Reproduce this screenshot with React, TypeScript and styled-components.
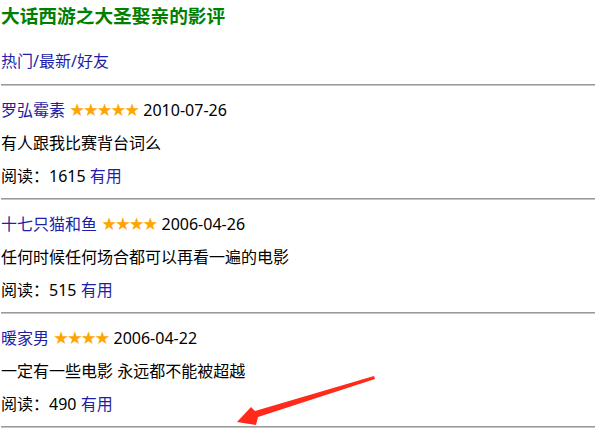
import React from "react";
import styled, { createGlobalStyle } from "styled-components";

const Global = createGlobalStyle`
  html, body { margin: 0; padding: 0; background: #fff; }
  body {
    font-family: "Noto Sans", "Noto Sans CJK SC", sans-serif;
    font-size: 16px;
    color: #000;
  }
`;

const Page = styled.div`
  position: relative;
  width: 595px;
  height: 437px;
  overflow: hidden;
`;

const Title = styled.h3`
  margin: 4px 0 0 1px;
  font-size: 18.7px;
  line-height: 24px;
  font-weight: bold;
  color: #008000;
`;

const Nav = styled.p`
  margin: 23px 0 0 1px;
  line-height: 20px;
  color: #1e1ea8;
`;

const NavLink = styled.a`
  color: #1e1ea8;
  text-decoration: none;
`;

const Rule = styled.hr<{ $gap?: number }>`
  margin: ${(p) => p.$gap ?? 12}px 0 0 1px;
  border: none;
  border-top: 1px solid #9a9a9a;
  border-bottom: 1px solid #c4c4c4;
  height: 0;
`;

const Review = styled.section`
  display: flex;
  flex-direction: column;
  gap: 13px;
  padding: 14px 0 0 1px;
`;

const Line = styled.p`
  margin: 0;
  height: 20px;
  line-height: 20px;
  white-space: nowrap;
`;

const UserLink = styled.a`
  color: #1e1ea8;
  text-decoration: none;
`;

const Stars = styled.span`
  font-family: "DejaVu Sans", sans-serif;
  font-size: 17.5px;
  line-height: 1;
  color: #ffa500;
  letter-spacing: -1.9px;
  margin-right: 1px;
`;

const Arrow = styled.svg`
  position: absolute;
  left: 230px;
  top: 370px;
`;

type ReviewData = {
  user: string;
  stars: number;
  date: string;
  text: string;
  reads: number;
};

const reviews: ReviewData[] = [
  { user: "罗弘霉素", stars: 5, date: "2010-07-26", text: "有人跟我比赛背台词么", reads: 1615 },
  { user: "十七只猫和鱼", stars: 4, date: "2006-04-26", text: "任何时候任何场合都可以再看一遍的电影", reads: 515 },
  { user: "暖家男", stars: 4, date: "2006-04-22", text: "一定有一些电影 永远都不能被超越", reads: 490 },
];

export default function App() {
  return (
    <Page>
      <Global />
      <Title>大话西游之大圣娶亲的影评</Title>
      <Nav>
        <NavLink href="#">热门</NavLink>/<NavLink href="#">最新</NavLink>/<NavLink href="#">好友</NavLink>
      </Nav>
      <Rule $gap={13} />
      {reviews.map((r) => (
        <React.Fragment key={r.user}>
          <Review>
            <Line>
              <UserLink href="#">{r.user}</UserLink> <Stars>{"★".repeat(r.stars)}</Stars> {r.date}
            </Line>
            <Line>{r.text}</Line>
            <Line>
              阅读：{r.reads} <UserLink href="#">有用</UserLink>
            </Line>
          </Review>
          <Rule />
        </React.Fragment>
      ))}
      <Arrow width="150" height="60" viewBox="0 0 150 60">
        <polygon
          points="7,52 21,37 25,41 144,6 145,9 28,47 26,55"
          fill="#ff2a1a"
        />
      </Arrow>
    </Page>
  );
}
